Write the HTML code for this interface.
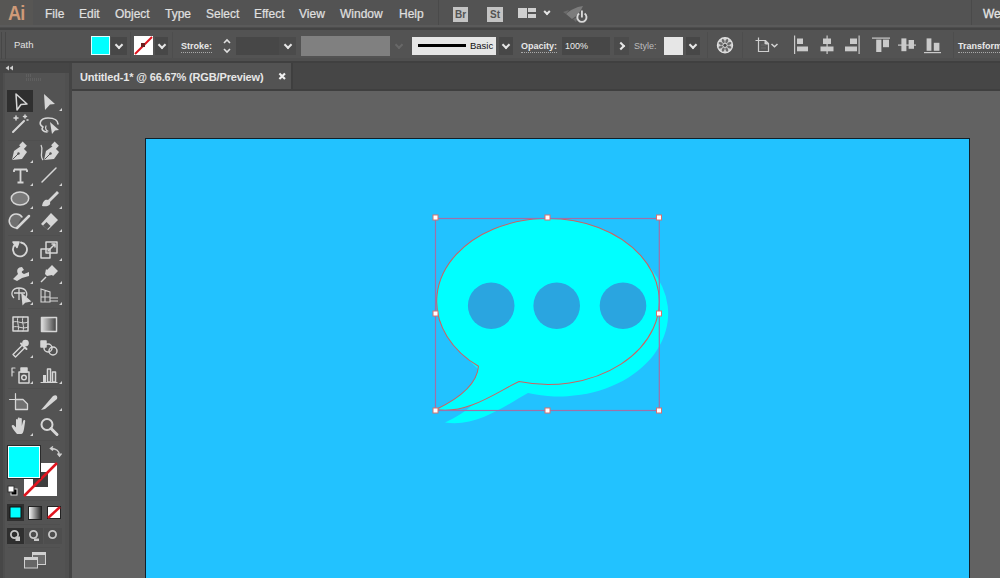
<!DOCTYPE html>
<html><head><meta charset="utf-8">
<style>
*{margin:0;padding:0;box-sizing:border-box}
html,body{width:1000px;height:578px;overflow:hidden;background:#626262;font-family:"Liberation Sans",sans-serif;position:relative}
.a{position:absolute}
#menubar{left:0;top:0;width:1000px;height:25px;background:#535353}
#sep1{left:0;top:25px;width:1000px;height:2px;background:#5a5a5a}
#sep2{left:0;top:27px;width:1000px;height:3px;background:#444;border-top:1px solid #4d4d4d}
#ctrl{left:0;top:30px;width:1000px;height:30px;background:#535353}
#sep3{left:0;top:58px;width:1000px;height:5px;background:linear-gradient(#4f4f4f 0,#4f4f4f 3px,#404040 3px)}
#tabbar{left:65px;top:63px;width:935px;height:26px;background:#464646}
#tab{left:72px;top:63px;width:219px;height:26px;background:#535353}
#tabline{left:65px;top:89px;width:935px;height:2px;background:#3f3f3f}
#canvas{left:71px;top:91px;width:929px;height:487px;background:#626262}
#tools{left:0;top:63px;width:65px;height:515px;background:#535353}
#toolhead{left:0;top:63px;width:69px;height:10px;background:#464646}
#gutter{left:65px;top:73px;width:4px;height:505px;background:#505050}
#gutter2{left:69px;top:63px;width:3px;height:515px;background:#444}
#artboard{left:145px;top:138px;width:825px;height:450px;background:#22c2ff;border:1px solid #10202a}
.menu{top:0;height:25px;line-height:29px;font-size:12px;color:#e0e0e0;-webkit-text-stroke:0.2px #e0e0e0}
.lbl{font-size:9px;color:#d8d8d8;top:41px;line-height:11px}
.dd{background:#474747;height:18px;top:37px}
.chev{position:absolute;left:50%;top:50%;width:5.5px;height:5.5px;border-right:2px solid #e6e6e6;border-bottom:2px solid #e6e6e6;transform:translate(-50%,-75%) rotate(45deg)}
.vsep{top:32px;width:1px;height:26px;background:#4d4d4d}
svg{position:absolute;overflow:visible}
</style></head><body>
<div class="a" id="menubar"></div>
<div class="a" id="sep1"></div>
<div class="a" id="sep2"></div>
<div class="a" id="ctrl"></div>
<div class="a" id="sep3"></div>
<div class="a" id="tabbar"></div>
<div class="a" id="tab"></div><div class="a" style="left:291px;top:63px;width:2px;height:26px;background:#3f3f3f"></div>
<div class="a" id="tabline"></div>
<div class="a" id="canvas"></div>
<div class="a" id="tools"></div>
<div class="a" id="toolhead"></div><div class="a" style="left:0;top:73px;width:3px;height:505px;background:#474747"></div><div class="a" style="left:3px;top:73px;width:2px;height:505px;background:#4e4e4e"></div>
<div class="a" id="gutter"></div><div class="a" id="gutter2"></div>
<div class="a" id="artboard"></div>

<!-- menu -->
<div class="a" style="left:0;top:0;width:33px;height:25px;background:#575654"></div><div class="a" style="left:8px;top:1px;font-size:21px;font-weight:bold;color:#cf9a78;letter-spacing:-0.8px;transform:scaleX(0.86);transform-origin:0 0">Ai</div>
<div class="a menu" style="left:45px">File</div>
<div class="a menu" style="left:79px">Edit</div>
<div class="a menu" style="left:115px">Object</div>
<div class="a menu" style="left:165px">Type</div>
<div class="a menu" style="left:206px">Select</div>
<div class="a menu" style="left:254px">Effect</div>
<div class="a menu" style="left:299px">View</div>
<div class="a menu" style="left:340px">Window</div>
<div class="a menu" style="left:399px">Help</div>
<div class="a" style="left:438px;top:0;width:1px;height:25px;background:#4a4a4a"></div>
<div class="a" style="left:453px;top:7px;width:15px;height:15px;background:#c4c4c4;color:#535353;font-size:10px;font-weight:bold;line-height:16px;text-align:center">Br</div>
<div class="a" style="left:487px;top:7px;width:16px;height:15px;background:#c4c4c4;color:#535353;font-size:10px;font-weight:bold;line-height:16px;text-align:center">St</div>
<div class="a" style="left:518px;top:8px;width:9px;height:10px;background:#d0d0d0"></div>
<div class="a" style="left:528px;top:8px;width:8px;height:4px;background:#d0d0d0"></div>
<div class="a" style="left:528px;top:14px;width:8px;height:4px;background:#d0d0d0"></div>
<div class="a" style="left:543px;top:9px;width:8px;height:8px"><div class="chev" style="width:5px;height:5px;border-width:2px"></div></div>
<svg style="left:0;top:0" width="600" height="25" viewBox="0 0 600 25">
 <path d="M566 14 C570 10 576 7 583 6 C581 11 577 16 572 19 Z" fill="#7c7c7c"/>
 <path d="M573 19 L576 22 L578 17 Z M566 14 L563 12 L569 10Z" fill="#6c6c6c"/>
 <path d="M579.2 13.6 A4.6 4.6 0 1 0 584.6 13.6" fill="none" stroke="#d8d8d8" stroke-width="1.9"/>
 <line x1="581.9" y1="10.5" x2="581.9" y2="17.5" stroke="#d8d8d8" stroke-width="1.9"/>
</svg>
<div class="a" style="left:971px;top:0;width:1px;height:25px;background:#4a4a4a"></div>
<div class="a" style="left:983px;top:6.5px;font-size:12px;color:#e4e4e4;-webkit-text-stroke:0.3px #e4e4e4">Web</div>

<!-- control bar -->
<div class="a" style="left:1px;top:32px;width:1px;height:27px;background:#474747"></div>
<div class="a" style="left:5px;top:32px;width:1px;height:27px;background:#474747"></div>
<div class="a lbl" style="left:14px;top:39px;font-size:9.5px;color:#e2e2e2">Path</div>
<div class="a" style="left:91px;top:36px;width:19px;height:19px;background:#00ffff;border:1px solid #e0ffff"></div>
<div class="a dd" style="left:111px;width:16px"><div class="chev"></div></div>
<div class="a vsep" style="left:130px"></div>
<div class="a" style="left:134px;top:36px;width:19px;height:19px;background:#fff;overflow:hidden">
 <svg width="19" height="19" style="left:0;top:0"><line x1="1" y1="18" x2="18" y2="1" stroke="#e0141e" stroke-width="2"/><rect x="7" y="7" width="4" height="4" fill="#6a2020"/></svg>
</div>
<div class="a dd" style="left:155px;width:13px"><div class="chev"></div></div>
<div class="a vsep" style="left:172px"></div>
<div class="a lbl" style="left:181px;font-weight:bold;color:#e8e8e8">Stroke:</div>
<div class="a" style="left:181px;top:52px;width:31px;height:1px;border-top:1px dotted #aaa"></div>
<svg style="left:222px;top:37px" width="10" height="18" viewBox="0 0 10 18"><path d="M2 6 L5 3 L8 6 M2 12 L5 15 L8 12" fill="none" stroke="#e0e0e0" stroke-width="1.6"/></svg>
<div class="a" style="left:236px;top:37px;width:43px;height:18px;background:#474747"></div>
<div class="a dd" style="left:279px;width:17px;background:#4b4b4b"><div class="chev"></div></div>
<div class="a" style="left:301px;top:36px;width:89px;height:20px;background:#808080"></div>
<div class="a" style="left:392px;top:37px;width:13px;height:18px"><div class="chev" style="border-color:#686868"></div></div>
<div class="a" style="left:412px;top:37px;width:84px;height:18px;background:#e6e6e6"></div>
<div class="a" style="left:418px;top:44px;width:48px;height:3px;background:#000"></div>
<div class="a" style="left:470px;top:40px;font-size:9.5px;color:#111">Basic</div>
<div class="a dd" style="left:499px;width:14px"><div class="chev"></div></div>
<div class="a lbl" style="left:521px;font-weight:bold;color:#e8e8e8">Opacity:</div>
<div class="a" style="left:521px;top:52px;width:36px;height:1px;border-top:1px dotted #aaa"></div>
<div class="a" style="left:562px;top:37px;width:48px;height:18px;background:#474747"></div>
<div class="a lbl" style="left:565px;color:#ececec">100%</div>
<div class="a dd" style="left:614px;width:15px;background:#4b4b4b"><div class="chev" style="transform:translate(-75%,-50%) rotate(-45deg)"></div></div>
<div class="a lbl" style="left:634px;color:#bdbdbd">Style:</div>
<div class="a" style="left:664px;top:37px;width:19px;height:18px;background:#e6e6e6"></div>
<div class="a dd" style="left:686px;width:14px"><div class="chev"></div></div>
<div class="a vsep" style="left:707px"></div>
<svg style="left:0;top:0" width="740" height="60" viewBox="0 0 740 60">
 <g transform="translate(725 45.3)">
  <circle r="7.6" fill="#cfcfcf" stroke="#e2e2e2" stroke-width="1.2"/>
  <g fill="#6a6a6a"><ellipse cx="0" cy="-4.6" rx="1.3" ry="2.2" transform="rotate(22.5)"/><ellipse cx="0" cy="-4.6" rx="1.3" ry="2.2" transform="rotate(67.5)"/><ellipse cx="0" cy="-4.6" rx="1.3" ry="2.2" transform="rotate(112.5)"/><ellipse cx="0" cy="-4.6" rx="1.3" ry="2.2" transform="rotate(157.5)"/><ellipse cx="0" cy="-4.6" rx="1.3" ry="2.2" transform="rotate(202.5)"/><ellipse cx="0" cy="-4.6" rx="1.3" ry="2.2" transform="rotate(247.5)"/><ellipse cx="0" cy="-4.6" rx="1.3" ry="2.2" transform="rotate(292.5)"/><ellipse cx="0" cy="-4.6" rx="1.3" ry="2.2" transform="rotate(337.5)"/></g>
  <circle r="1.6" fill="#4a4a4a"/>
 </g>
</svg>
<div class="a vsep" style="left:742px"></div>
<svg style="left:0;top:0" width="800" height="60" viewBox="0 0 800 60">
 <path d="M758.5 37.5V51.5H768.5V43.5L765.5 40.5H755.5" fill="#555" stroke="#cfcfcf" stroke-width="1.2"/>
 <path d="M765 40.5V44H768.5" fill="#cfcfcf" stroke="#cfcfcf" stroke-width="1"/>
 <path d="M761 45H766M761 48H766" stroke="#6a6a6a" stroke-width="1"/>
 <path d="M771.5 44L774.5 46.8L777.5 44" fill="none" stroke="#d4d4d4" stroke-width="1.5"/>
</svg>
<!-- align icons -->
<svg style="left:792px;top:35px" width="170" height="20" viewBox="0 0 170 20">
 <g fill="#cacaca">
  <rect x="2" y="0.5" width="1.2" height="18.5"/><rect x="5" y="3.5" width="6" height="5.5"/><rect x="5" y="11.5" width="11" height="4.8"/>
  <rect x="34.5" y="0.5" width="1.2" height="18.5"/><rect x="31" y="3.5" width="8" height="5.5"/><rect x="28.5" y="11.5" width="13" height="4.8"/>
  <rect x="66.5" y="0.5" width="1.2" height="18.5"/><rect x="58" y="3.5" width="7" height="5.5"/><rect x="53" y="11.5" width="12" height="4.8"/>
  <rect x="80" y="2.5" width="18" height="1.2"/><rect x="84.2" y="4.6" width="5.2" height="12.4"/><rect x="91" y="4.6" width="6" height="7.6"/>
  <rect x="106" y="9.5" width="18" height="1.2"/><rect x="109.4" y="3.4" width="5" height="12.8"/><rect x="116.6" y="5" width="5.4" height="8.8"/>
  <rect x="132" y="17" width="17" height="1.2"/><rect x="134.6" y="3.4" width="4.8" height="12.4"/><rect x="141.8" y="7.8" width="5.6" height="8"/>
 </g>
</svg>
<div class="a vsep" style="left:953px"></div>
<div class="a lbl" style="left:958px;font-weight:bold;color:#eaeaea">Transform</div>
<div class="a" style="left:958px;top:52px;width:42px;height:1px;border-top:1px dotted #aaa"></div>


<!-- artwork -->
<svg style="left:0;top:0" width="1000" height="578" viewBox="0 0 1000 578">
 
 <path d="M487.5 376 A109 83 0 1 1 528 393 C509 403 477 428 445 422.5 C467 412 486 398 487.5 376 Z" fill="#00ffff"/>
 <path d="M478.5 366.3 A111.3 83 0 1 1 519 381.6 C500 390 468 415 436 409.5 C458 399 477 385 478.5 366.3 Z" fill="#00ffff"/>
 <g fill="#2aa5e0">
  <circle cx="491.2" cy="305.7" r="23.3"/>
  <circle cx="556.7" cy="305.7" r="23.3"/>
  <circle cx="623" cy="305.7" r="23.3"/>
 </g>
 <path d="M478.5 366.3 A111.3 83 0 1 1 519 381.6 C500 390 468 415 436 409.5 C458 399 477 385 478.5 366.3 Z" fill="none" stroke="#cc6262" stroke-width="1.05"/>
 <rect x="435.5" y="218.5" width="223.8" height="192" fill="none" stroke="#a070a8" stroke-width="1.2"/>
 <g fill="#fff" stroke="#d87070" stroke-width="1">
  <rect x="433" y="215" width="5" height="5"/><rect x="545" y="215" width="5" height="5"/><rect x="656.5" y="215" width="5" height="5"/>
  <rect x="433" y="311" width="5" height="5"/><rect x="656.5" y="311" width="5" height="5"/>
  <rect x="433" y="408" width="5" height="5"/><rect x="545" y="408" width="5" height="5"/><rect x="656.5" y="408" width="5" height="5"/>
 </g>
</svg>


<!-- toolbar -->
<svg style="left:0;top:0" width="72" height="578" viewBox="0 0 72 578">
 <defs><linearGradient id="g1" x1="0" x2="1"><stop offset="0" stop-color="#e0e0e0"/><stop offset="1" stop-color="#404040"/></linearGradient>
 <linearGradient id="g2" x1="0" x2="1"><stop offset="0" stop-color="#fff"/><stop offset="1" stop-color="#222"/></linearGradient></defs>
 <!-- header -->
 <path d="M5.5 68 L9 65.5 V70.5Z M9.5 68 L13 65.5 V70.5Z" fill="#d0d0d0"/>
 <g stroke="#5f5f5f" stroke-width="1"><path d="M26.5 74V77M28.5 74V77M30.5 74V77M26.5 78V81M28.5 78V81M30.5 78V81M32.5 78V81M34.5 78V81M36.5 78V81M38.5 78V81M40.5 78V81"/></g>
 <rect x="7" y="90" width="26" height="22" fill="#2f2f2f"/>
 <g fill="#d2d2d2" stroke="none">
  <path d="M59 111 L62 108 V111Z M30 163 L33 160 V163Z M30 186 L33 183 V186Z M59 186 L62 183 V186Z M30 209 L33 206 V209Z M59 209 L62 206 V209Z M30 232 L33 229 V232Z M59 232 L62 229 V232Z M30 261 L33 258 V261Z M59 261 L62 258 V261Z M30 284 L33 281 V284Z M59 284 L62 281 V284Z M30 305 L33 302 V305Z M59 305 L62 302 V305Z M30 358 L33 355 V358Z M30 384 L33 381 V384Z M59 384 L62 381 V384Z M59 411 L62 408 V411Z M30 436 L33 433 V436Z"/>
 </g>
 <g stroke="#4f4f4f" stroke-width="1"><line x1="8" y1="140.5" x2="60" y2="140.5"/><line x1="8" y1="235.5" x2="60" y2="235.5"/><line x1="8" y1="308.5" x2="60" y2="308.5"/><line x1="8" y1="388.5" x2="60" y2="388.5"/><line x1="8" y1="440.5" x2="60" y2="440.5"/><line x1="8" y1="500.5" x2="60" y2="500.5"/><line x1="8" y1="524.5" x2="60" y2="524.5"/><line x1="8" y1="547.5" x2="60" y2="547.5"/></g>
 <g fill="none" stroke="#d6d6d6" stroke-width="1.5" stroke-linejoin="round" stroke-linecap="round">
  <!-- selection -->
  <path d="M16 94 L27 104 L21 104.5 L17 110 Z"/>
  <!-- wand -->
  <path d="M13 132 L24 121" stroke-width="2"/>
  <path d="M16 116 V120 M14 118 H18 M25 115 V118 M23.5 116.5 H26.5 M27 120 H28"/>
  <!-- lasso -->
  <path d="M47 132 C43 132 41 129 43 127 C38 124 40 118 48 118 C55 118 58 121 58 124" stroke-width="1.6"/>
  <path d="M46 126 C45 128 46 131 48 131" stroke-width="1.2"/>
  <!-- type T -->
  <path d="M14 169.5 H27 M14 169.5 V172 M27 169.5 V172 M20.5 169.5 V182.5 M17.5 182.5 H23.5" stroke-width="1.8" stroke-linecap="butt"/>
  <!-- line -->
  <path d="M42 182 L56 168"/>
  <!-- ellipse -->
  <ellipse cx="20" cy="198.5" rx="8.7" ry="6.4" fill="#7a7a7a"/>
  <!-- shaper -->
  <path d="M16 228 A7 7 0 1 1 22 217" fill="#6f6f6f"/>
  <path d="M17 228 L29 216" stroke-width="2.5"/>
  <!-- rotate -->
  <path d="M15 244.5 A7 7 0 1 0 21 242.5" stroke-width="1.8"/>
  <path d="M13 242 L17 247.5 L19 242Z" fill="#d6d6d6"/>
  <!-- scale -->
  <rect x="41" y="249" width="9" height="9"/><rect x="46" y="242" width="11" height="11"/><path d="M48 251 L55 244 M52 244 H55 V247"/>
  <!-- mesh -->
  <rect x="13" y="317" width="15" height="14"/><path d="M13 322 C18 320 22 325 28 322 M13 327 C18 325 22 330 28 327 M18 317 C16 322 20 326 18 331 M23 317 C21 322 25 326 23 331" stroke-width="1"/>
  <!-- gradient -->
  <rect x="41.5" y="317.5" width="15" height="14" fill="url(#g1)"/>
  <!-- eyedropper -->
  <path d="M13 354.5 L22.5 345 L25 347.5 L15.5 357 Z" stroke-width="1.4"/>
  <path d="M21 343.5 L26.5 349" stroke-width="2"/>
  <circle cx="25.5" cy="343" r="2.6" fill="#d6d6d6"/>
  <!-- blend -->
  <rect x="41" y="341" width="5" height="6" fill="#d6d6d6"/><circle cx="48" cy="348" r="4"/><circle cx="53" cy="351" r="4"/>
  <!-- symbol sprayer -->
  <path d="M12 368 H15 M12 368 V376 M12 372 H14" stroke-width="1.2"/>
  <rect x="19" y="372" width="10" height="11"/><circle cx="24" cy="377.5" r="2.3"/><rect x="21" y="368" width="6" height="4" fill="#d6d6d6"/>
  <!-- graph -->
  <path d="M41 382.5 H57" stroke-width="1.2"/><rect x="43" y="375" width="3" height="7" fill="#d6d6d6" stroke="none"/><rect x="47.5" y="369" width="3" height="13"/><rect x="52.5" y="372" width="3" height="10"/>
  <!-- artboard -->
  <path d="M15.5 399.5 H23 L27.5 404 V409.5 H15.5 Z" stroke-width="1.3" fill="#707070"/><path d="M9.5 399.5 H15.5 M15.5 393.5 V399.5" stroke-width="1.2"/>
  <!-- zoom -->
  <circle cx="47" cy="424.5" r="5.5" stroke-width="2"/><path d="M51 428.5 L57 434.5" stroke-width="3"/>
 </g>
 <g fill="#d6d6d6">
  <!-- direct selection -->
  <path d="M44 94 L55 104 L50 104.5 L45 110 Z"/>
  <!-- lasso arrow -->
  <path d="M50 122 L59 130 L55 130.5 L52 134 Z"/>
  <!-- pen -->
  <path d="M12 160 L14 151 L21 146 L27 152 L22 159 Z"/><rect x="20" y="143" width="6" height="5" transform="rotate(45 23 145.5)"/>
  <path d="M12.5 159.5 L18 154" stroke="#535353" stroke-width="1"/><circle cx="18.5" cy="153.5" r="1.2" fill="#535353"/>
  <!-- curvature -->
  <path d="M44 160 L46 151 L53 146 L59 152 L54 159 Z"/><rect x="52" y="143" width="6" height="5" transform="rotate(45 55 145.5)"/>
  <path d="M44.5 159.5 L50 154" stroke="#535353" stroke-width="1"/><circle cx="50.5" cy="153.5" r="1.2" fill="#535353"/>
  <path d="M43 160 C39 155 44 150 41 145" fill="none" stroke="#d6d6d6" stroke-width="1.3"/>
  <!-- paintbrush -->
  <path d="M42 206 C43 200 46 199 48 200 L57 191 L59 193 L50 202 C51 205 48 207 42 206Z"/>
  <!-- eraser -->
  <path d="M41 224 L51 213 L58 220 L48 230 Z"/>
  <path d="M43 225.5 L46.5 222 L50.5 226 L47 229.5Z" fill="#555"/>
  <!-- puppet -->
  <path d="M13 279 L18 274 C16 270 18 267 22 267 L24 270 C21 271 21 273 24 274 L29 272 V276 L22 278 L17 281Z"/>
  <!-- pin -->
  <path d="M47 270 L52 265 L58 271 L53 276 L52 275 L47 276 L45 274 L46 269 Z"/><path d="M41 282 L46 277" stroke="#d6d6d6" stroke-width="1.5"/>
  <!-- slice -->
  <path d="M41 410 L53 396 C56 394 58 396 57 399 L45 409 Z"/>
  <!-- hand -->
  <path d="M17 434 C15 432 13 429 12 427 C11 425.5 12.5 424.5 14 425.5 L16 427.5 V420 C16 418.8 17.8 418.8 17.8 420 V426 V418.5 C17.8 417.3 19.8 417.3 19.8 418.5 V426 V419 C19.8 417.8 21.8 417.8 21.8 419 V426 L23.2 420.8 C23.5 419.5 25.5 419.8 25.2 421.2 L24 429 C23.5 432 22.5 434 21 434 Z"/>
 </g>
 <g fill="none" stroke="#d6d6d6" stroke-width="1.3">
  <!-- shape builder -->
  <path d="M14 298 C10 294 12 288 19 288 C26 288 28 293 26 297"/><path d="M19 288 V300 M14 293 H25"/>
  <path d="M22 294 L30 301 L25 302 L23 304Z" fill="#d6d6d6"/>
  <!-- perspective -->
  <path d="M41 289 L50 292 V302 H41 Z M41 297 H50 M45 290 V302 M50 298 H58 M50 301 H58" stroke-width="1.1"/>
 </g>
 <!-- fill/stroke -->
 <rect x="24" y="463" width="33" height="33" fill="#fff"/>
 <rect x="33" y="472" width="15" height="15" fill="#3e3e3e"/>
 <line x1="24" y1="496" x2="57" y2="463" stroke="#e0141e" stroke-width="2.5"/>
 <rect x="7" y="445" width="34" height="34" fill="#2a2a2a"/>
 <rect x="8" y="446" width="32" height="32" fill="#f0ffff"/>
 <rect x="9" y="447" width="30" height="30" fill="#00ffff"/>
 <path d="M51 448.5 C56 448.5 59.5 451 59.5 455.5 M53 446.5 L50.5 448.5 L53 450.5 M57.5 453.5 L59.5 456 L61.5 453.5" fill="none" stroke="#cfcfcf" stroke-width="1.5"/>
 <rect x="11" y="489" width="6" height="6" fill="#000" stroke="#ddd" stroke-width="1"/><rect x="8" y="486" width="6" height="6" fill="#fff" stroke="#333" stroke-width="1"/>
 <!-- color mode -->
 <rect x="7" y="504" width="17" height="17" fill="#2f2f2f"/>
 <rect x="10" y="507" width="11" height="11" fill="#00ffff" stroke="#111" stroke-width="1"/>
 <rect x="28.5" y="506.5" width="13" height="13" fill="url(#g2)" stroke="#222" stroke-width="1"/>
 <rect x="47.5" y="506.5" width="13" height="12" fill="#fff" stroke="#222" stroke-width="1"/>
 <line x1="48" y1="518" x2="60" y2="507" stroke="#e0141e" stroke-width="2.5"/>
 <!-- draw modes -->
 <rect x="7" y="528" width="17" height="16" fill="#2f2f2f"/>
 <rect x="25" y="528" width="18" height="16" fill="#4b4b4b"/>
 <rect x="44" y="528" width="18" height="16" fill="#4e4e4e"/>
 <g fill="none" stroke="#c8c8c8" stroke-width="1.8">
  <circle cx="14.5" cy="534.5" r="3.6"/>
  <circle cx="33.5" cy="534.5" r="3.6"/>
  <circle cx="52.5" cy="534.5" r="3.6"/>
 </g>
 <rect x="15.5" y="536.5" width="4.5" height="4.5" fill="#c8c8c8"/>
 <rect x="34" y="538.5" width="5" height="2.5" fill="#c8c8c8"/>
 <!-- screen mode -->
 <rect x="32.5" y="552.5" width="13" height="12" fill="#6e6e6e" stroke="#d0d0d0" stroke-width="1"/>
 <rect x="33" y="553" width="12" height="2" fill="#d0d0d0"/>
 <rect x="24.5" y="557.5" width="13" height="10.5" fill="#666" stroke="#d0d0d0" stroke-width="1"/>
 <rect x="25" y="558" width="12" height="2" fill="#d0d0d0"/>
</svg>
<!-- tab -->
<div class="a" style="left:80px;top:71px;font-size:11px;font-weight:bold;color:#e6e6e6;letter-spacing:-0.15px">Untitled-1* @ 66.67% (RGB/Preview)</div>
<svg style="left:0;top:0" width="300" height="90" viewBox="0 0 300 90"><path d="M279.4 73.4 L285 79 M285 73.4 L279.4 79" stroke="#f0f0f0" stroke-width="2.1"/></svg>

</body></html>
